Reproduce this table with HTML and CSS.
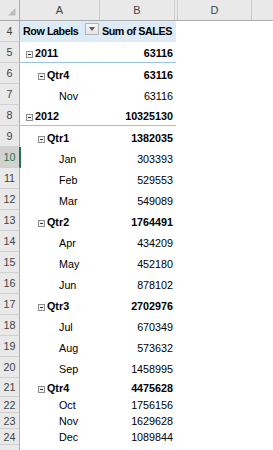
FILE: index.html
```html
<!DOCTYPE html>
<html>
<head>
<meta charset="utf-8">
<link rel="stylesheet" href="styles.css">
</head>
<body>
<div class="sheet">
  <div class="colheads">
    <div class="ch corner"><svg class="tri" width="8" height="8" viewBox="0 0 8 8"><polygon points="7.5,0 7.5,7.5 0,7.5" fill="#bcbcbc"/></svg></div>
    <div class="ch cha">A</div>
    <div class="ch chb">B</div>
    <div class="ch chc"></div>
    <div class="ch chd">D</div>
    <div class="ch che"></div>
  </div>

  <div class="row">
    <div class="rh">4</div>
    <div class="cell a hdr"><span class="ht">Row Labels</span><span class="dd"><span class="ddtri"></span></span></div>
    <div class="cell b hdr hb"><span class="ht">Sum of SALES</span></div>
  </div>

  <div class="row">
    <div class="rh">5</div>
    <div class="cell a l1 bold line"><svg class="mbox" width="7" height="7" viewBox="0 0 7 7"><rect x="0.5" y="0.5" width="6" height="6" fill="#f3f3f3" stroke="#8c8c8c"/><line x1="2" y1="3.5" x2="5" y2="3.5" stroke="#333"/></svg>2011</div>
    <div class="cell b num bold line">63116</div>
  </div>
  <div class="row">
    <div class="rh">6</div>
    <div class="cell a l2 bold"><svg class="mbox" width="7" height="7" viewBox="0 0 7 7"><rect x="0.5" y="0.5" width="6" height="6" fill="#f3f3f3" stroke="#8c8c8c"/><line x1="2" y1="3.5" x2="5" y2="3.5" stroke="#333"/></svg>Qtr4</div>
    <div class="cell b num bold">63116</div>
  </div>
  <div class="row">
    <div class="rh">7</div>
    <div class="cell a l3">Nov</div>
    <div class="cell b num">63116</div>
  </div>
  <div class="row">
    <div class="rh">8</div>
    <div class="cell a l1 bold line"><svg class="mbox" width="7" height="7" viewBox="0 0 7 7"><rect x="0.5" y="0.5" width="6" height="6" fill="#f3f3f3" stroke="#8c8c8c"/><line x1="2" y1="3.5" x2="5" y2="3.5" stroke="#333"/></svg>2012</div>
    <div class="cell b num bold line">10325130</div>
  </div>
  <div class="row">
    <div class="rh">9</div>
    <div class="cell a l2 bold"><svg class="mbox" width="7" height="7" viewBox="0 0 7 7"><rect x="0.5" y="0.5" width="6" height="6" fill="#f3f3f3" stroke="#8c8c8c"/><line x1="2" y1="3.5" x2="5" y2="3.5" stroke="#333"/></svg>Qtr1</div>
    <div class="cell b num bold">1382035</div>
  </div>
  <div class="row">
    <div class="rh sel">10</div>
    <div class="cell a l3">Jan</div>
    <div class="cell b num">303393</div>
  </div>
  <div class="row">
    <div class="rh">11</div>
    <div class="cell a l3">Feb</div>
    <div class="cell b num">529553</div>
  </div>
  <div class="row">
    <div class="rh">12</div>
    <div class="cell a l3">Mar</div>
    <div class="cell b num">549089</div>
  </div>
  <div class="row">
    <div class="rh">13</div>
    <div class="cell a l2 bold"><svg class="mbox" width="7" height="7" viewBox="0 0 7 7"><rect x="0.5" y="0.5" width="6" height="6" fill="#f3f3f3" stroke="#8c8c8c"/><line x1="2" y1="3.5" x2="5" y2="3.5" stroke="#333"/></svg>Qtr2</div>
    <div class="cell b num bold">1764491</div>
  </div>
  <div class="row">
    <div class="rh">14</div>
    <div class="cell a l3">Apr</div>
    <div class="cell b num">434209</div>
  </div>
  <div class="row">
    <div class="rh">15</div>
    <div class="cell a l3">May</div>
    <div class="cell b num">452180</div>
  </div>
  <div class="row">
    <div class="rh">16</div>
    <div class="cell a l3">Jun</div>
    <div class="cell b num">878102</div>
  </div>
  <div class="row">
    <div class="rh">17</div>
    <div class="cell a l2 bold"><svg class="mbox" width="7" height="7" viewBox="0 0 7 7"><rect x="0.5" y="0.5" width="6" height="6" fill="#f3f3f3" stroke="#8c8c8c"/><line x1="2" y1="3.5" x2="5" y2="3.5" stroke="#333"/></svg>Qtr3</div>
    <div class="cell b num bold">2702976</div>
  </div>
  <div class="row">
    <div class="rh">18</div>
    <div class="cell a l3">Jul</div>
    <div class="cell b num">670349</div>
  </div>
  <div class="row">
    <div class="rh">19</div>
    <div class="cell a l3">Aug</div>
    <div class="cell b num">573632</div>
  </div>
  <div class="row">
    <div class="rh">20</div>
    <div class="cell a l3">Sep</div>
    <div class="cell b num">1458995</div>
  </div>
  <div class="row r21">
    <div class="rh">21</div>
    <div class="cell a l2 bold"><svg class="mbox" width="7" height="7" viewBox="0 0 7 7"><rect x="0.5" y="0.5" width="6" height="6" fill="#f3f3f3" stroke="#8c8c8c"/><line x1="2" y1="3.5" x2="5" y2="3.5" stroke="#333"/></svg>Qtr4</div>
    <div class="cell b num bold">4475628</div>
  </div>
  <div class="row short">
    <div class="rh">22</div>
    <div class="cell a l3">Oct</div>
    <div class="cell b num">1756156</div>
  </div>
  <div class="row short">
    <div class="rh">23</div>
    <div class="cell a l3">Nov</div>
    <div class="cell b num">1629628</div>
  </div>
  <div class="row short">
    <div class="rh">24</div>
    <div class="cell a l3">Dec</div>
    <div class="cell b num">1089844</div>
  </div>
  <div class="row short">
    <div class="rh"></div>
  </div>
</div>
</body>
</html>
```

FILE: styles.css
```css
* { box-sizing: border-box; }
body {
  margin: 0;
  background: #ffffff;
  font-family: "Liberation Sans", Arial, sans-serif;
  font-size: 10.75px;
  color: #000;
}
.sheet {
  width: 273px;
  height: 450px;
  overflow: hidden;
}
.colheads {
  display: flex;
  height: 21px;
  background: #e9e9e9;
  border-bottom: 1px solid #ababab;
}
.ch {
  height: 20px;
  border-right: 1px solid #cbcbcb;
  display: flex;
  align-items: center;
  justify-content: center;
  color: #444;
  font-size: 11px;
}
.corner {
  width: 20px;
  border-right: 1px solid #ababab;
  align-items: flex-end;
  justify-content: flex-end;
  padding: 0 3px 4px 0;
}
.tri { display: block; }
.cha { width: 80px; }
.chb { width: 75px; }
.chc { width: 3px; }
.chd { width: 74px; }
.che { flex: 1; border-right: none; }

.row {
  display: flex;
  height: 21px;
}
.row.r21 { height: 19px; }
.row.short { height: 16px; }

.rh {
  width: 20px;
  flex: none;
  background: #e9e9e9;
  border-right: 1px solid #ababab;
  border-bottom: 1px solid #d0d0d0;
  display: flex;
  align-items: center;
  justify-content: center;
  color: #444;
  font-size: 10.75px;
}
.rh.sel {
  background: #d2d2d2;
  color: #217346;
  border-right: 1px solid #217346;
  box-shadow: 1px 0 0 #217346;
}

.cell {
  display: flex;
  align-items: flex-end;
  line-height: 13px;
  padding-bottom: 2px;
  white-space: nowrap;
}
.short .cell { padding-bottom: 1px; }
.a { width: 80px; flex: none; }
.b { width: 76px; flex: none; }
.bold { font-weight: bold; }
.num {
  justify-content: flex-end;
  padding-right: 3px;
}
.line { border-bottom: 1px solid #9bc2e6; }

.hdr {
  background: #ddebf7;
  font-weight: bold;
  padding-left: 3px;
  padding-bottom: 4px;
}
.ht { letter-spacing: -0.45px; }
.hb { padding-left: 2px; }
.dd {
  margin-left: auto;
  margin-right: 1px;
  align-self: center;
  margin-top: -1px;
  width: 14px;
  height: 12px;
  border: 1px solid #b4b4b4;
  background: linear-gradient(#f8f8f8, #e4e4e4);
  display: flex;
  align-items: center;
  justify-content: center;
}
.ddtri {
  width: 0;
  height: 0;
  border-left: 3.5px solid transparent;
  border-right: 3.5px solid transparent;
  border-top: 4px solid #5a5a5a;
}

.l1 { padding-left: 6px; }
.l2 { padding-left: 18px; }
.l3 { padding-left: 39px; }
.mbox {
  flex: none;
  margin-right: 2px;
  margin-bottom: 2px;
}
```
